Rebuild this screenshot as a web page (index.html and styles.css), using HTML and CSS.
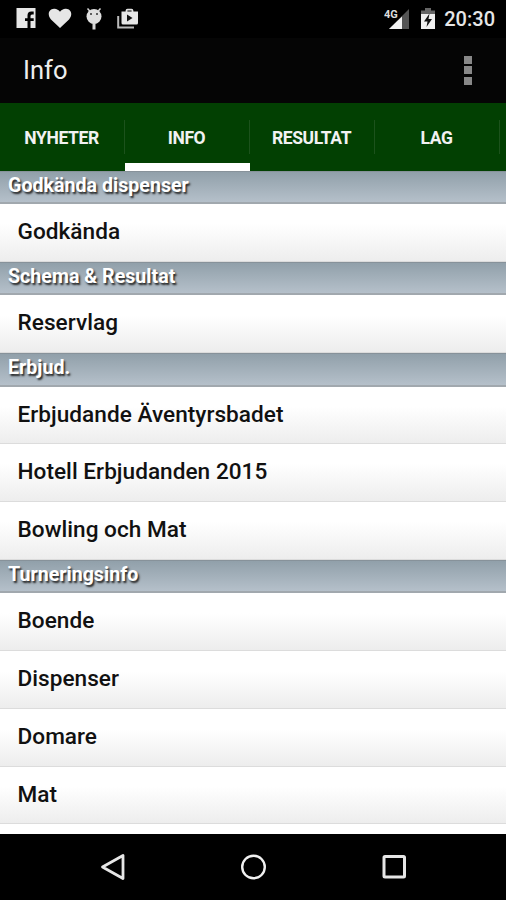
FILE: index.html
```html
<!DOCTYPE html>
<html lang="sv">

<head>
    <meta charset="UTF-8">
    <meta name="viewport" content="width=device-width, initial-scale=1.0">
    <title>Info</title>
    <link rel="stylesheet" href="styles.css">
</head>

<body>
    <div class="screen">
        <div class="status-bar">
            <div class="status-icons">
                <svg width="20" height="20" viewBox="0 0 20 20">
                    <path fill="#e6e6e6" d="M0.5 0h19v20h-5v-7h3.200v-2.800h-3.200V8q0-1.500 1.500-1.500h1.700V3.500h-2.500q-3.700 0-3.700 4v2.700H9v2.800h2.500V20H0.500z" />
                </svg>
                <svg width="24" height="20" viewBox="0 0 24 20">
                    <path fill="#e6e6e6" d="M12 20L3 11.500C-1 7 .5 1 6 .7c2.500-.2 4.600 1.200 6 3 1.400-1.800 3.500-3.200 6-3 5.500.3 7 6.300 3 10.800z" />
                </svg>
                <svg class="bug" width="16" height="23" viewBox="0 0 16 23">
                    <path d="M1.500 .5l2.700 3M14.500 .5l-2.700 3" stroke="#d8d8d8" stroke-width="1.500" />
                    <circle cx="8" cy="8.500" r="7.500" fill="#e0e0e0" />
                    <path d="M8 15v6.500" stroke="#d8d8d8" stroke-width="3" />
                    <circle cx="5" cy="6" r="1" fill="#333" />
                    <circle cx="11" cy="6" r="1" fill="#333" />
                </svg>
                <svg width="22" height="21" viewBox="0 0 22 21">
                    <path d="M1.200 8v11.500H17" fill="none" stroke="#bbb" stroke-width="2" />
                    <path d="M9.500 4V2.700q0-1 1-1h4q1 0 1 1V4" fill="none" stroke="#e0e0e0" stroke-width="1.800" />
                    <path d="M4.500 3.500h16.500v11.500q0 1.500-1.500 1.500h-13.500Q4.500 16.500 4.500 15z" fill="#e6e6e6" />
                    <path d="M10 6.500v7l5.500-3.500z" fill="#111" />
                </svg>
            </div>
            <div class="status-right">
                <svg width="25" height="21" viewBox="0 0 25 21">
                    <path d="M25 1v20H5z" fill="#555" />
                    <path d="M18 8.500v12.500H5z" fill="#f4f4f4" />
                    <text class="network" x="0" y="10">4G</text>
                </svg>
                <svg class="battery" width="14" height="21" viewBox="0 0 14 21">
                    <path d="M0 6V2.500h4V0h6v2.500h4V6z" fill="#666" />
                    <path d="M0 6h14v15H0z" fill="#f0f0f0" />
                    <path d="M8.500 5.500L3 13.500h3.500l-1 5.500L11 11H7.500z" fill="#111" />
                </svg>
                <span class="clock">20:30</span>
            </div>
        </div>

        <div class="action-bar">
            <h1>Info</h1>
            <div class="overflow">
                <span></span>
                <span></span>
                <span></span>
            </div>
        </div>

        <div class="tabs">
            <div class="tab">NYHETER</div>
            <div class="tab active">INFO</div>
            <div class="tab">RESULTAT</div>
            <div class="tab">LAG</div>
        </div>

        <div class="list">
            <div class="section">Godkända dispenser</div>
            <div class="row">Godkända</div>
            <div class="section">Schema &amp; Resultat</div>
            <div class="row">Reservlag</div>
            <div class="section">Erbjud.</div>
            <div class="row">Erbjudande Äventyrsbadet</div>
            <div class="row">Hotell Erbjudanden 2015</div>
            <div class="row">Bowling och Mat</div>
            <div class="section">Turneringsinfo</div>
            <div class="row">Boende</div>
            <div class="row">Dispenser</div>
            <div class="row">Domare</div>
            <div class="row">Mat</div>
        </div>

        <div class="nav-bar">
            <svg width="28" height="30" viewBox="0 0 28 30">
                <path d="M4.500 15L25 3.500v23z" fill="none" stroke="#e6e6e6" stroke-width="2.800" stroke-linejoin="round" />
            </svg>
            <svg width="28" height="30" viewBox="0 0 28 30">
                <circle cx="14.500" cy="15" r="11.300" fill="none" stroke="#f0f0f0" stroke-width="2.400" />
            </svg>
            <svg width="28" height="30" viewBox="0 0 28 30">
                <rect x="4" y="4.500" width="20.500" height="20.500" rx="1" fill="none" stroke="#e6e6e6" stroke-width="3" />
            </svg>
        </div>
    </div>
</body>

</html>
```
FILE: styles.css
```css
body {
    margin: 0;
    font-family: Roboto, sans-serif;
    background-color: #000;
}

.screen {
    display: flex;
    flex-direction: column;
    width: 506px;
    height: 900px;
    overflow: hidden;
}

.status-bar {
    display: flex;
    justify-content: space-between;
    box-sizing: border-box;
    height: 38px;
    padding: 8px 11px 0 16px;
}

.status-icons {
    display: flex;
    gap: 12px;
}

.status-icons .bug {
    margin: 0 3px 0 2px;
}

.status-right {
    display: flex;
}

.network {
    font-size: 11px;
    font-weight: bold;
    fill: #ddd;
}

.battery {
    margin: 0 9px 0 12px;
}

.clock {
    font-size: 20px;
    font-weight: 500;
    line-height: 22px;
    color: #e6e6e6;
}

.action-bar {
    display: flex;
    align-items: center;
    justify-content: space-between;
    height: 64.5px;
    padding: 0 34px 0 23px;
    background-color: #050505;
}

h1 {
    margin: 0;
    font-size: 25.5px;
    font-weight: 400;
    color: #eee;
}

.overflow {
    display: flex;
    flex-direction: column;
    gap: 2.5px;
}

.overflow span {
    width: 8.5px;
    height: 8px;
    background-color: #888;
}

.tabs {
    display: flex;
    height: 68px;
    background-color: #024002;
}

.tab {
    display: flex;
    align-items: center;
    justify-content: center;
    box-sizing: border-box;
    width: 125px;
    padding: 2px 2px 0 0;
    font-size: 17.5px;
    font-weight: 700;
    letter-spacing: -0.4px;
    color: #f2f2f2;
    background: linear-gradient(#1c521c, #1c521c) right 17px / 1px 34px no-repeat;
}

.tab.active {
    border-bottom: 8px solid #fff;
    padding-top: 10px;
}

/* List */
.list {
    flex: 1;
    overflow: hidden;
    background-color: #fff;
}

.section {
    box-sizing: border-box;
    height: 33.5px;
    padding-left: 8px;
    font-size: 19.6px;
    font-weight: 700;
    letter-spacing: 0.02px;
    line-height: 28.5px;
    color: #fff;
    text-shadow: 1.5px 1.5px 2px #222;
    background: linear-gradient(#91a0aa, #b5c0ca);
    border-top: 1px solid #87929a;
    border-bottom: 2px solid #a1a8ae;
}

.row {
    box-sizing: border-box;
    height: 57.75px;
    padding-left: 17.5px;
    font-size: 22.6px;
    font-weight: 500;
    letter-spacing: 0.03px;
    line-height: 56.5px;
    color: #111;
    background: linear-gradient(#fff 35%, #ededed);
    border-bottom: 1px solid #dcdcdc;
}

.nav-bar {
    display: flex;
    align-items: center;
    justify-content: center;
    gap: 113px;
    height: 66.5px;
    background-color: #000;
}
```
